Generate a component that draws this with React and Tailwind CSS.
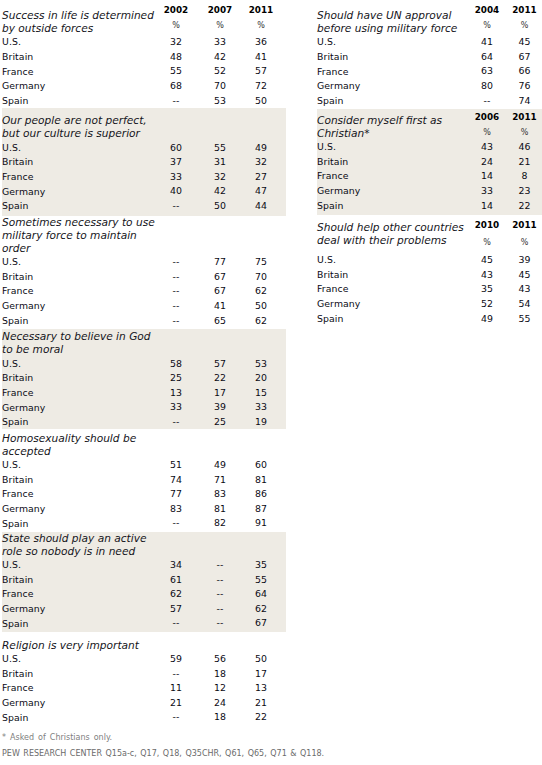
import clsx from "clsx";

const LEFT_COLS = "grid-cols-[152px_44px_44px_38px]";
const RIGHT_COLS = "grid-cols-[150px_40px_35px]";

const leftSections = [
  {
    title: ["Success in life is determined", "by outside forces"],
    years: ["2002", "2007", "2011"],
    pad: "pt-[3px]",
    headPad: "pb-[2px]",
    rows: [
      ["U.S.", "32", "33", "36"],
      ["Britain", "48", "42", "41"],
      ["France", "55", "52", "57"],
      ["Germany", "68", "70", "72"],
      ["Spain", "--", "53", "50"],
    ],
  },
  {
    title: ["Our people are not perfect,", "but our culture is superior"],
    shade: true,
    pad: "pt-[6.5px] pb-[2.5px]",
    rows: [
      ["U.S.", "60", "55", "49"],
      ["Britain", "37", "31", "32"],
      ["France", "33", "32", "27"],
      ["Germany", "40", "42", "47"],
      ["Spain", "--", "50", "44"],
    ],
  },
  {
    title: ["Sometimes necessary to use", "military force to maintain", "order"],
    pad: "pb-[1.5px]",
    rows: [
      ["U.S.", "--", "77", "75"],
      ["Britain", "--", "67", "70"],
      ["France", "--", "67", "62"],
      ["Germany", "--", "41", "50"],
      ["Spain", "--", "65", "62"],
    ],
  },
  {
    title: ["Necessary to believe in God", "to be moral"],
    shade: true,
    pad: "pt-[1px]",
    rows: [
      ["U.S.", "58", "57", "53"],
      ["Britain", "25", "22", "20"],
      ["France", "13", "17", "15"],
      ["Germany", "33", "39", "33"],
      ["Spain", "--", "25", "19"],
    ],
  },
  {
    title: ["Homosexuality should be", "accepted"],
    pad: "pt-[2.5px] pb-[1px]",
    rows: [
      ["U.S.", "51", "49", "60"],
      ["Britain", "74", "71", "81"],
      ["France", "77", "83", "86"],
      ["Germany", "83", "81", "87"],
      ["Spain", "--", "82", "91"],
    ],
  },
  {
    title: ["State should play an active", "role so nobody is in need"],
    shade: true,
    pad: "pb-[1px]",
    rows: [
      ["U.S.", "34", "--", "35"],
      ["Britain", "61", "--", "55"],
      ["France", "62", "--", "64"],
      ["Germany", "57", "--", "62"],
      ["Spain", "--", "--", "67"],
    ],
  },
  {
    title: ["Religion is very important"],
    pad: "pt-[7px]",
    rows: [
      ["U.S.", "59", "56", "50"],
      ["Britain", "--", "18", "17"],
      ["France", "11", "12", "13"],
      ["Germany", "21", "24", "21"],
      ["Spain", "--", "18", "22"],
    ],
  },
];

const rightSections = [
  {
    title: ["Should have UN approval", "before using military force"],
    years: ["2004", "2011"],
    pad: "pt-[3px] pb-[1px]",
    headPad: "pb-[2px]",
    rows: [
      ["U.S.", "41", "45"],
      ["Britain", "64", "67"],
      ["France", "63", "66"],
      ["Germany", "80", "76"],
      ["Spain", "--", "74"],
    ],
  },
  {
    title: ["Consider myself first as", "Christian*"],
    years: ["2006", "2011"],
    shade: true,
    pad: "pt-[1px] pb-[2.5px]",
    rows: [
      ["U.S.", "43", "46"],
      ["Britain", "24", "21"],
      ["France", "14", "8"],
      ["Germany", "33", "23"],
      ["Spain", "14", "22"],
    ],
  },
  {
    title: ["Should help other countries", "deal with their problems"],
    years: ["2010", "2011"],
    pad: "pt-[3px]",
    titlePad: "pb-[6px]",
    headPad: "pb-[2.5px]",
    pctGap: "mt-[2px]",
    rows: [
      ["U.S.", "45", "39"],
      ["Britain", "43", "45"],
      ["France", "35", "43"],
      ["Germany", "52", "54"],
      ["Spain", "49", "55"],
    ],
  },
];

function Section({ s, cols }) {
  return (
    <div className={clsx(s.shade && "bg-[#eeebe4]", s.pad)}>
      <div className={clsx("grid items-end", cols)}>
        <div className={clsx("italic text-[10.6px] leading-[13px] whitespace-nowrap text-[#141420]", s.titlePad)}>
          {s.title.map((t, i) => (
            <div key={i}>{t}</div>
          ))}
        </div>
        {s.years &&
          s.years.map((y) => (
            <div key={y} className={clsx("text-center", s.headPad)}>
              <div className="font-bold text-[8.8px] leading-[15px] text-black">{y}</div>
              <div className={clsx("text-[8px] leading-[15px] text-[#333]", s.pctGap)}>%</div>
            </div>
          ))}
      </div>
      {s.rows.map((r) => (
        <div key={r[0]} className={clsx("grid h-[14.6px] items-center", cols)}>
          <div className="text-[9.3px] tracking-[0.1px]">{r[0]}</div>
          {r.slice(1).map((v, i) => (
            <div key={i} className="text-center text-[9.4px]">{v}</div>
          ))}
        </div>
      ))}
    </div>
  );
}

export default function App() {
  return (
    <div className="w-[542px] h-[765px] bg-white text-[#0a0a14] font-['DejaVu_Sans',sans-serif] overflow-hidden">
      <div className="flex">
        <div className="ml-[2px] w-[284px]">
          {leftSections.map((s, i) => (
            <Section key={i} s={s} cols={LEFT_COLS} />
          ))}
          <div className="mt-[7px] text-[8px] leading-[12px] text-[#808080] [word-spacing:1.5px]">
            * Asked of Christians only.
          </div>
          <div className="mt-[4px] text-[8px] leading-[12px] text-[#6b6b6b] whitespace-nowrap [word-spacing:1px]">
            PEW RESEARCH CENTER Q15a-c, Q17, Q18, Q35CHR, Q61, Q65, Q71 &amp; Q118.
          </div>
        </div>
        <div className="ml-[31px] w-[225px]">
          {rightSections.map((s, i) => (
            <Section key={i} s={s} cols={RIGHT_COLS} />
          ))}
        </div>
      </div>
    </div>
  );
}
